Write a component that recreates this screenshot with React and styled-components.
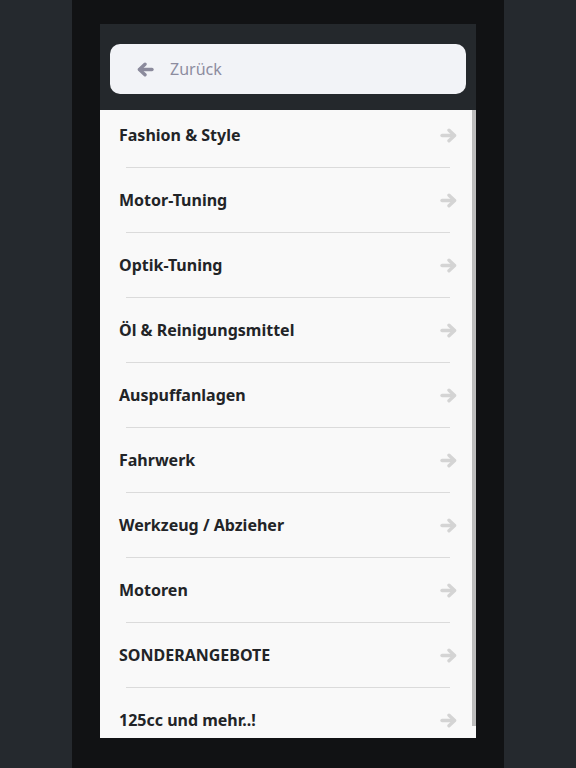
import React from "react";
import styled, { createGlobalStyle } from "styled-components";

const categories = [
  "Fashion & Style",
  "Motor-Tuning",
  "Optik-Tuning",
  "Öl & Reinigungsmittel",
  "Auspuffanlagen",
  "Fahrwerk",
  "Werkzeug / Abzieher",
  "Motoren",
  "SONDERANGEBOTE",
  "125cc und mehr..!",
];

const GlobalStyle = createGlobalStyle`
  html, body {
    margin: 0;
    padding: 0;
    background: #25292e;
    font-family: "Noto Sans", "Open Sans", sans-serif;
  }
`;

const Page = styled.div`
  display: flex;
  justify-content: center;
  height: 768px;
`;

const Column = styled.div`
  width: 432px;
  background: #111214;
  padding: 24px 28px 30px;
  box-sizing: border-box;
  display: flex;
`;

const Panel = styled.div`
  flex: 1;
  display: flex;
  flex-direction: column;
  background: #24282c;
  overflow: hidden;
`;

const Header = styled.div`
  padding: 20px 10px 16px;
`;

const SearchBox = styled.div`
  height: 50px;
  background: #f2f3f7;
  border-radius: 10px;
  display: flex;
  align-items: center;
  gap: 16px;
  padding-left: 27px;
  color: #8d8c9f;
  font-size: 16px;
`;

const ListWrap = styled.div`
  flex: 1;
  position: relative;
  background: #f9f9f9;
  overflow: hidden;
`;

const Thumb = styled.div`
  position: absolute;
  top: 0;
  right: 0;
  width: 4px;
  height: 616px;
  background: #bcbcbc;
`;

const Row = styled.div`
  height: 50px;
  display: flex;
  align-items: center;
  justify-content: space-between;
  padding: 0 19px 0 19px;
  font-size: 16px;
  font-weight: 700;
  color: #222427;
`;

const Separator = styled.div`
  height: 1px;
  background: #dbdbdb;
  margin: 7px 26px;
`;

const Arrow = ({ left, color }) => (
  <svg
    width="17"
    height="15"
    viewBox="0 0 17 15"
    style={left ? { transform: "scaleX(-1)" } : undefined}
  >
    <g stroke={color} strokeWidth="3.4" strokeLinecap="round" strokeLinejoin="round" fill="none">
      <path d="M2 7.5 H14" />
      <path d="M9 2.2 L14.6 7.5 L9 12.8" />
    </g>
  </svg>
);

export default function App() {
  return (
    <>
      <GlobalStyle />
      <Page>
        <Column>
          <Panel>
            <Header>
              <SearchBox>
                <Arrow left color="#8b8a9c" />
                <span>Zurück</span>
              </SearchBox>
            </Header>
            <ListWrap>
              {categories.map((name, i) => (
                <React.Fragment key={name}>
                  <Row>
                    <span>{name}</span>
                    <Arrow color="#d4d4d4" />
                  </Row>
                  {i < categories.length - 1 && <Separator />}
                </React.Fragment>
              ))}
              <Thumb />
            </ListWrap>
          </Panel>
        </Column>
      </Page>
    </>
  );
}
